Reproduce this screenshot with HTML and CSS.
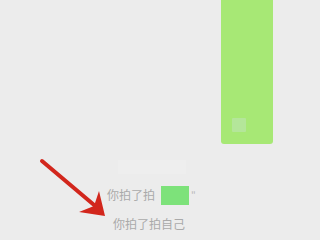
FILE: index.html
```html
<!DOCTYPE html>
<html>
<head>
<meta charset="utf-8">
<link rel="stylesheet" href="styles.css">
</head>
<body>
<div class="chat">
  <div class="bubble-row">
    <div class="bubble"><div class="thumb"></div></div>
  </div>
  <div class="ghost"></div>
  <div class="tip tip1"><span>你拍了拍</span><span class="mask"></span><span class="q">"</span></div>
  <div class="tip tip2">你拍了拍自己</div>
  <svg class="arrow" width="320" height="240" viewBox="0 0 320 240">
    <line x1="42" y1="161" x2="100" y2="210" stroke="#d2261c" stroke-width="4" stroke-linecap="round"/>
    <polygon points="105,216 79,212 94,206 99,191" fill="#d2261c"/>
  </svg>
</div>
</body>
</html>
```
FILE: styles.css
```css
html, body { margin: 0; padding: 0; }
body { background: #ececec; width: 320px; height: 240px; overflow: hidden; font-family: "Noto Sans CJK SC", "Liberation Sans", sans-serif; }
.chat { position: relative; width: 320px; height: 240px; display: flex; flex-direction: column; }
.bubble-row { display: flex; padding-left: 221px; }
.bubble { width: 52px; height: 144px; background: #a7e875; border-radius: 0 0 3px 3px; position: relative; }
.thumb { position: absolute; left: 11px; top: 118px; width: 14px; height: 14px; background: #b4e69a; border-radius: 1px; }
.ghost { margin: 16px 0 0 118px; width: 68px; height: 14px; background: #eeeeee; }
.tip { color: #aaaaaa; font-size: 12px; line-height: 20px; display: flex; align-items: center; }
.tip1 { margin: 11px 0 0 107px; }
.mask { display: inline-block; width: 28px; height: 19px; background: #7de27a; margin-left: 6px; }
.q { margin-left: 2px; font-size: 10px; color: #b8b8b8; }
.tip2 { margin: 9px 0 0 113px; }
.arrow { position: absolute; left: 0; top: 0; }
```
